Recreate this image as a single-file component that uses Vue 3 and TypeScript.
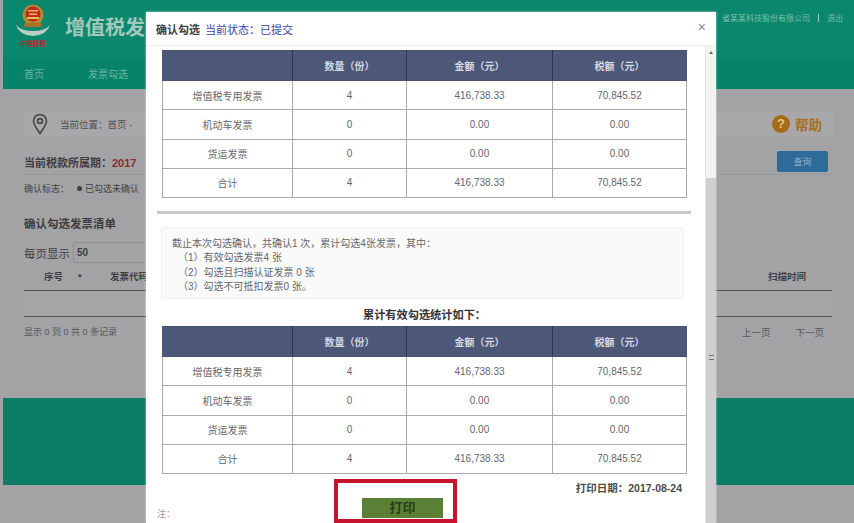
<script setup lang="ts">
interface Row { name: string; count: string; amount: string; tax: string }
const rows: Row[] = [
  { name: '增值税专用发票', count: '4', amount: '416,738.33', tax: '70,845.52' },
  { name: '机动车发票', count: '0', amount: '0.00', tax: '0.00' },
  { name: '货运发票', count: '0', amount: '0.00', tax: '0.00' },
  { name: '合计', count: '4', amount: '416,738.33', tax: '70,845.52' },
]
const heads = ['', '数量（份）', '金额（元）', '税额（元）']
const notes = ['（1）有效勾选发票4 张', '（2）勾选且扫描认证发票 0 张', '（3）勾选不可抵扣发票0 张。']
</script>

<template>
  <div class="page">
    <header class="top">
      <div class="brand">
        <svg class="logo" viewBox="0 0 36 44" width="36" height="44">
          <path d="M1 22 Q4 32 18 33 Q32 32 35 22 Q30 28 18 28 Q6 28 1 22Z" fill="#b9cfc6" />
          <circle cx="18" cy="12" r="10.500" fill="#b08a2e" />
          <circle cx="18" cy="11" r="7.500" fill="#c0272d" />
          <rect x="13" y="7" width="10" height="1.500" fill="#e8c04a" />
          <rect x="14" y="10.500" width="8" height="1.500" fill="#e8c04a" />
          <rect x="12" y="14" width="12" height="2" fill="#e8c04a" />
          <rect x="9" y="20" width="18" height="4" rx="2" fill="#a9702a" />
          <text x="18" y="43" text-anchor="middle" class="logo-text">中国税务</text>
        </svg>
        <span class="title">增值税发</span>
        <span class="user">
          <span>省某某科技股份有限公司</span><i></i><span>退出</span>
        </span>
      </div>
      <nav class="nav"><span>首页</span><span>发票勾选</span></nav>
    </header>

    <main class="main">
      <div class="crumb">
        <svg viewBox="0 0 16 22" width="16" height="22" fill="none" stroke="#454545" stroke-width="1.600">
          <path d="M8 20.500 C4 15 1.500 11.500 1.500 8 a6.500 6.500 0 0 1 13 0 C14.500 11.500 12 15 8 20.500Z" />
          <circle cx="8" cy="8" r="2.400" />
        </svg>
        <span class="crumb-text">当前位置：首页 - </span>
        <span class="help"><b>?</b>帮助</span>
      </div>
      <div class="period">
        <span>当前税款所属期：<em>2017</em></span>
        <button class="query">查询</button>
      </div>
      <div class="flag"><span>确认标志：</span><span class="dot"></span><span>已勾选未确认</span></div>
      <h3 class="list-title">确认勾选发票清单</h3>
      <div class="per">每页显示<span class="sel">50</span></div>
      <div class="thead">
        <span class="c-no">序号</span><span class="c-star">*</span><span class="c-code">发票代码</span><span class="c-time">扫描时间</span>
      </div>
      <div class="tbody"></div>
      <div class="tfoot">
        <span>显示 0 到 0 共 0 条记录</span>
        <span class="pager"><span>上一页</span><span>下一页</span></span>
      </div>
    </main>

    <footer class="foot"></footer>
    <div class="tail"></div>

    <section class="modal">
      <div class="m-head">
        <b>确认勾选</b><span class="state">当前状态：已提交</span><span class="close">×</span>
      </div>
      <div class="m-body">
        <div class="m-scroll">
          <table class="grid">
            <thead><tr><th v-for="h in heads" :key="h">{{ h }}</th></tr></thead>
            <tbody>
              <tr v-for="r in rows" :key="r.name">
                <td>{{ r.name }}</td><td>{{ r.count }}</td><td>{{ r.amount }}</td><td>{{ r.tax }}</td>
              </tr>
            </tbody>
          </table>
          <div class="rule"></div>
          <div class="summary">
            <p class="lead">截止本次勾选确认，共确认1 次，累计勾选4张发票，其中：</p>
            <p v-for="n in notes" :key="n" class="item">{{ n }}</p>
          </div>
          <h4 class="sub">累计有效勾选统计如下：</h4>
          <table class="grid">
            <thead><tr><th v-for="h in heads" :key="h">{{ h }}</th></tr></thead>
            <tbody>
              <tr v-for="r in rows" :key="r.name">
                <td>{{ r.name }}</td><td>{{ r.count }}</td><td>{{ r.amount }}</td><td>{{ r.tax }}</td>
              </tr>
            </tbody>
          </table>
          <div class="date">打印日期：2017-08-24</div>
          <div class="actions">
            <span class="note">注：</span>
            <div class="mark"><button class="print">打印</button></div>
          </div>
        </div>
        <div class="bar"><span class="arrow"></span><span class="thumb"><i></i></span></div>
      </div>
    </section>
  </div>
</template>

<style>
html, body { margin: 0; background: #a3a2a5; }
</style>

<style scoped>
.page {
  position: relative;
  width: 854px;
  height: 523px;
  overflow: hidden;
  display: flex;
  flex-direction: column;
  background: #a3a2a5;
  color: #3f3f41;
  font-family: "Liberation Sans", "Noto Sans CJK SC", sans-serif;
  font-size: 9px;
}
.top { flex: 0 0 89px; margin-left: 3px; background: #0b876d; display: flex; flex-direction: column; }
.brand { flex: 0 0 58px; display: flex; align-items: flex-start; background: #0a876d; }
.logo { margin: 3px 0 0 12px; flex: none; }
.logo-text { font-size: 6.500px; font-weight: 700; fill: #b62a2e; }
.title { margin: 15px 0 0 14px; font-size: 20px; line-height: 26px; font-weight: 700; color: #a3c9bc; white-space: nowrap; flex: none; }
.user { margin: 12px 0 0 auto; padding-right: 11px; display: flex; align-items: center; gap: 8px; color: #7fbfac; font-size: 8px; white-space: nowrap; }
.user i { width: 1px; height: 8px; background: #a5d2c5; }
.nav { flex: 1; background: #07836a; display: flex; align-items: center; gap: 44px; padding: 0 0 0 21px; color: #6ab59f; font-size: 10px; }
.main { flex: 0 0 309px; padding: 22px 22px 0 24px; box-sizing: border-box; }
.crumb { height: 26px; margin-right: -1px; display: flex; align-items: center; background: #a8a7aa; padding-left: 8px; }
.crumb-text { margin-left: 12px; font-size: 9.500px; color: #505052; }
.help { margin-left: auto; margin-right: 11px; display: flex; align-items: center; gap: 5px; color: #a8701c; font-size: 13.500px; font-weight: 700; }
.help b { width: 18px; height: 18px; border-radius: 50%; background: #a96a18; color: #e2c58c; font-size: 13px; line-height: 18px; text-align: center; }
.period { margin-top: 12px; height: 25px; display: flex; align-items: center; justify-content: space-between; font-size: 11px; font-weight: 700; color: #3d3d3f; border-bottom: 1px solid #98979a; }
.period em { font-style: normal; color: #8d2a30; }
.query { width: 51px; height: 21px; margin-right: 4px; border: 0; border-radius: 2px; background: #2e6a9a; color: #8fb2cc; font: 9px "Liberation Sans", "Noto Sans CJK SC", sans-serif; }
.flag { margin-top: 7px; display: flex; align-items: center; gap: 3px; font-size: 9px; }
.dot { width: 5px; height: 5px; margin-left: 5px; border-radius: 50%; background: #3f3f41; }
.list-title { margin: 21px 0 0; font-size: 11.500px; line-height: 16px; font-weight: 700; color: #3d3d3f; }
.per { margin-top: 10px; display: flex; align-items: center; gap: 3px; font-size: 11.500px; }
.sel { width: 200px; height: 19px; border: 1px solid #8f8e91; border-radius: 2px; line-height: 19px; padding-left: 3px; font-size: 10px; font-weight: 700; }
.thead { position: relative; height: 23px; margin-top: 4px; border-bottom: 1px solid #565658; font-size: 9.500px; font-weight: 700; line-height: 20px; }
.thead span { position: absolute; top: 0; }
.c-no { left: 20px; }
.c-star { left: 54px; }
.c-code { left: 86px; }
.c-time { left: 744px; }
.tbody { height: 25px; border-bottom: 1px solid #565658; background: #a6a5a8; }
.tfoot { margin-top: 8px; display: flex; justify-content: space-between; font-size: 9px; color: #58585a; }
.pager { display: flex; gap: 25px; padding-right: 8px; font-size: 9.500px; }
.foot { flex: 0 0 87px; margin-left: 3px; background: #0a7d64; }
.tail { flex: 1; background: #a3a2a5; }

.modal {
  position: absolute;
  left: 146px;
  top: 12px;
  width: 570px;
  height: 511px;
  background: #fff;
  display: flex;
  flex-direction: column;
  box-shadow: 0 0 2px rgba(255, 255, 255, 0.7);
}
.m-head { flex: 0 0 33px; display: flex; align-items: center; padding-left: 10px; font-size: 11px; border-bottom: 1px solid #eeeeef; }
.m-head b { color: #3e3e40; }
.state { margin-left: 5px; color: #3a3fa8; }
.close { margin-left: auto; margin-right: 10px; margin-top: -4px; color: #8b8b8d; font-size: 14px; }
.m-body { flex: 1; display: flex; min-height: 0; }
.m-scroll { flex: 1; min-width: 0; padding: 4px 18px 0 16px; overflow: hidden; }
.grid { width: 525px; border-collapse: collapse; table-layout: fixed; }
.grid th { height: 29px; padding: 0; background: #4d5878; border: 1px solid #47506d; border-left-color: #2e3650; border-right-color: #2e3650; color: #d5d8e2; font-size: 10px; font-weight: 700; }
.grid th:first-child { width: 129px; border-left-color: #4d5878; }
.grid th:nth-child(2) { width: 113px; }
.grid th:nth-child(3) { width: 145px; }
.grid th:last-child { border-right-color: #4d5878; }
.grid td { height: 28.250px; padding: 0; border: 1px solid #a9a9ae; text-align: center; font-size: 10px; color: #66666a; }
.rule { height: 3px; margin: 13px -4px 0 -5px; background: #c9cac6; }
.summary { margin: 13px 3px 0 -1px; height: 72px; box-sizing: border-box; padding: 9px 10px; background: #fafafa; border: 1px solid #f0f0f0; border-radius: 3px; font-size: 10px; line-height: 14.300px; color: #66666a; }
.summary p { margin: 0; }
.summary .item { padding-left: 6px; }
.sub { margin: 9px 0 4px; height: 14px; text-align: center; font: 700 11.200px/14px "Liberation Serif", "Noto Sans CJK SC", serif; color: #333; }
.date { margin-top: 8px; padding-right: 5px; text-align: right; font-size: 10.500px; line-height: 12px; font-weight: 700; color: #4a4a4c; }
.actions { position: relative; height: 40px; }
.note { position: absolute; left: -5px; top: 13px; color: #9a9a9c; font-size: 9px; }
.mark { position: absolute; left: 172px; top: -15px; width: 123px; height: 44px; box-sizing: border-box; border: 4px solid #c8132c; padding: 15px 0 0 24px; }
.print { display: block; width: 81px; height: 20px; border: 0; padding: 0; background: #5b8035; color: #27401a; font: 700 13px/20px "Liberation Sans", "Noto Sans CJK SC", sans-serif; }
.bar { flex: 0 0 11px; position: relative; background: #f3f3f4; border-left: 1px solid #e2e2e4; box-sizing: border-box; }
.arrow { position: absolute; left: 3px; top: 5px; border: 2px solid transparent; border-bottom: 3px solid #6b6b6e; border-top: 0; }
.thumb { position: absolute; left: 0; right: 0; top: 132px; bottom: 0; background: #cfcfd2; display: flex; align-items: center; justify-content: center; }
.thumb i { width: 5px; height: 5px; margin-top: 14px; border-top: 1px solid #77777a; border-bottom: 1px solid #77777a; box-sizing: border-box; }
</style>
